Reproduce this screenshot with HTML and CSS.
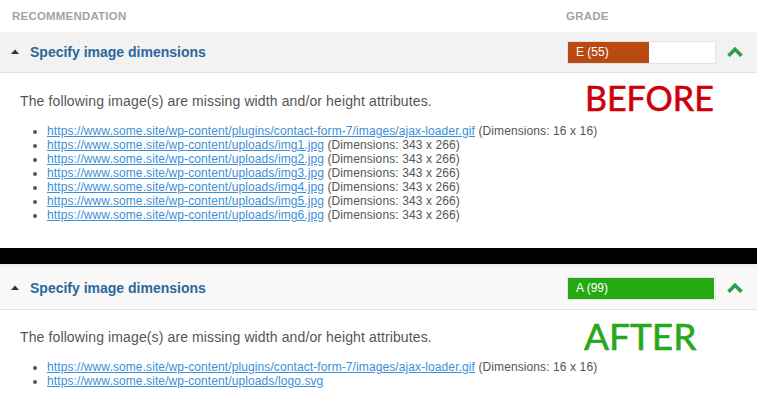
FILE: index.html
```html
<!DOCTYPE html>
<html lang="en">
<head>
<meta charset="utf-8">
<title>Specify image dimensions</title>
<link rel="stylesheet" href="styles.css">
</head>
<body>
<section class="panel">
  <div class="cols">
    <span class="col-rec">RECOMMENDATION</span>
    <span class="col-grade">GRADE</span>
  </div>
  <div class="row">
    <svg class="caret" width="8" height="5" viewBox="0 0 8 5"><polygon points="0,5 4,0.5 8,5" fill="#333"/></svg>
    <span class="title">Specify image dimensions</span>
    <div class="grade"><div class="fill fill-e" style="width:55%">E (55)</div></div>
    <svg class="chev" width="16" height="10" viewBox="0 0 16 10"><polyline points="1.5,8.8 8,2.3 14.5,8.8" fill="none" stroke="#2f9e48" stroke-width="3.6"/></svg>
  </div>
  <div class="body body-before">
    <p class="intro">The following image(s) are missing width and/or height attributes.</p>
    <ul class="list">
      <li><a href="#">https://www.some.site/wp-content/plugins/contact-form-7/images/ajax-loader.gif</a> (Dimensions: 16 x 16)</li>
      <li><a href="#">https://www.some.site/wp-content/uploads/img1.jpg</a> (Dimensions: 343 x 266)</li>
      <li><a href="#">https://www.some.site/wp-content/uploads/img2.jpg</a> (Dimensions: 343 x 266)</li>
      <li><a href="#">https://www.some.site/wp-content/uploads/img3.jpg</a> (Dimensions: 343 x 266)</li>
      <li><a href="#">https://www.some.site/wp-content/uploads/img4.jpg</a> (Dimensions: 343 x 266)</li>
      <li><a href="#">https://www.some.site/wp-content/uploads/img5.jpg</a> (Dimensions: 343 x 266)</li>
      <li><a href="#">https://www.some.site/wp-content/uploads/img6.jpg</a> (Dimensions: 343 x 266)</li>
    </ul>
    <div class="stamp stamp-before">BEFORE</div>
  </div>
</section>
<div class="divider"></div>
<section class="panel">
  <div class="row row-after">
    <svg class="caret" width="8" height="5" viewBox="0 0 8 5"><polygon points="0,5 4,0.5 8,5" fill="#333"/></svg>
    <span class="title">Specify image dimensions</span>
    <div class="grade"><div class="fill fill-a" style="width:99%">A (99)</div></div>
    <svg class="chev" width="16" height="10" viewBox="0 0 16 10"><polyline points="1.5,8.8 8,2.3 14.5,8.8" fill="none" stroke="#2f9e48" stroke-width="3.6"/></svg>
  </div>
  <div class="body body-after">
    <p class="intro">The following image(s) are missing width and/or height attributes.</p>
    <ul class="list">
      <li><a href="#">https://www.some.site/wp-content/plugins/contact-form-7/images/ajax-loader.gif</a> (Dimensions: 16 x 16)</li>
      <li><a href="#">https://www.some.site/wp-content/uploads/logo.svg</a></li>
    </ul>
    <div class="stamp stamp-after">AFTER</div>
  </div>
</section>
</body>
</html>
```

FILE: styles.css
```css
* { box-sizing: border-box; }
html, body { margin: 0; padding: 0; background: #fff; }
body {
  width: 757px;
  height: 402px;
  overflow: hidden;
  font-family: "Liberation Sans", Arial, sans-serif;
  color: #555;
}
.cols {
  height: 32px;
  display: flex;
  align-items: center;
  padding-left: 12px;
  font-size: 11.5px;
  font-weight: bold;
  letter-spacing: 0.2px;
  color: #a3a3a3;
}
.col-rec { width: 554px; }
.row {
  height: 41px;
  display: flex;
  align-items: center;
  padding: 0 14px 0 11px;
  background: #f2f2f2;
  border-bottom: 1px solid #e4e4e4;
}
.row-after {
  height: 46px;
  background: #f8f8f8;
  border-top: 3px solid #efefef;
}
.caret { flex: none; margin-top: -1px; }
.title {
  flex: 1;
  margin-left: 11px;
  font-size: 14px;
  font-weight: bold;
  color: #2a679c;
}
.grade {
  flex: none;
  width: 149px;
  height: 23px;
  background: #fff;
  border: 1px solid #e3e3e3;
  margin-right: 11px;
}
.fill {
  height: 100%;
  color: #fff;
  font-size: 12px;
  line-height: 21px;
  padding-left: 8px;
  white-space: nowrap;
}
.fill-e { background: #b94a12; }
.fill-a { background: #25a912; }
.chev { flex: none; }
.body {
  position: relative;
  padding: 20px 20px 0;
}
.body-before { height: 175px; }
.body-after { height: 92px; padding-top: 19px; }
.intro {
  margin: 0 0 15px;
  font-size: 14px;
  line-height: 16px;
  letter-spacing: 0.12px;
  color: #555;
}
.list {
  margin: 0;
  padding-left: 27px;
  font-size: 12px;
  line-height: 14px;
  letter-spacing: 0.1px;
  color: #555;
}
.list a { color: #3b8fd8; text-decoration: underline; }
.stamp {
  position: absolute;
  font-family: Lato, "Open Sans", sans-serif;
  line-height: 1;
  white-space: nowrap;
  -webkit-text-stroke: 0.6px currentColor;
}
.stamp-before {
  left: 585px;
  top: 8px;
  font-size: 34px;
  color: #cc0009;
}
.stamp-after {
  left: 584px;
  top: 7px;
  font-size: 37px;
  color: #27a81c;
}
.divider { height: 16px; background: #000; }
```
